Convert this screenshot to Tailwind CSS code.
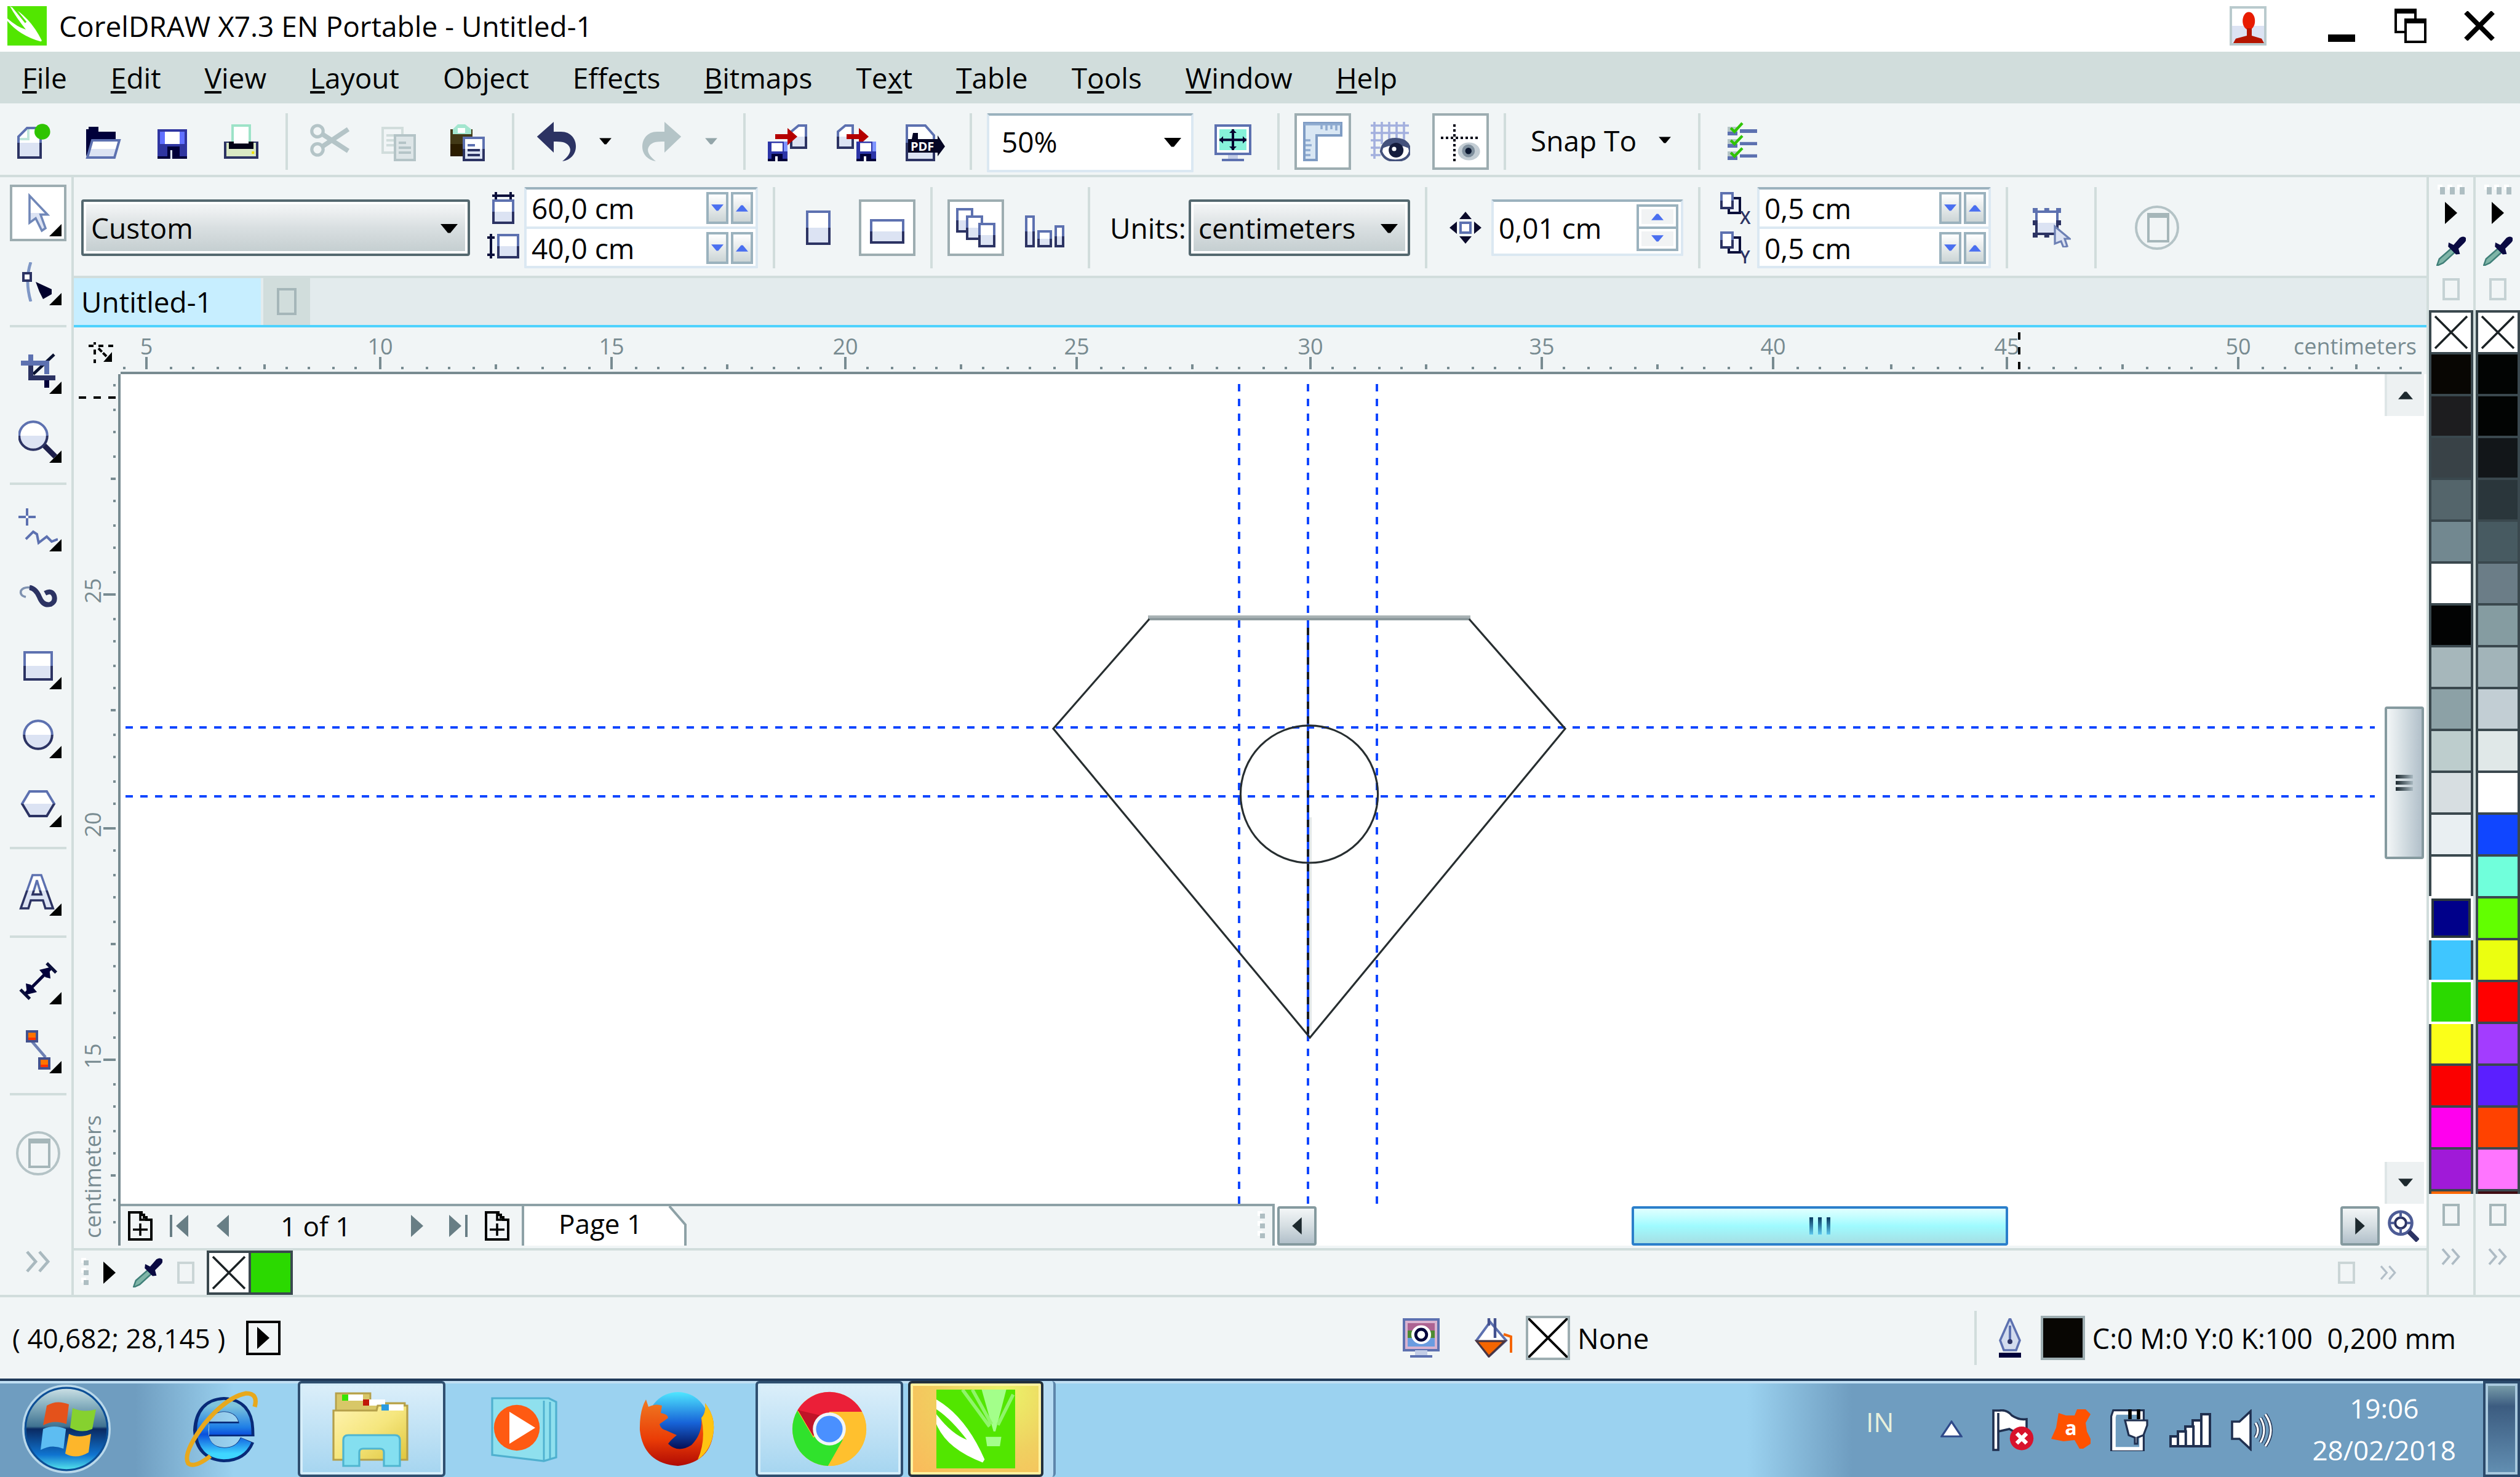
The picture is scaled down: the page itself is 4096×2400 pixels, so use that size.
<!DOCTYPE html>
<html lang="en">
<head>
    <meta charset="UTF-8">
    <meta name="viewport" content="width=device-width, initial-scale=1.0">
    <title>CorelDRAW X7.3 EN Portable - Untitled-1</title>
    <script src="https://cdn.jsdelivr.net/npm/@tailwindcss/browser@4"></script>
</head>
<body class="flex h-screen flex-col overflow-hidden bg-[#f1f5f6] font-['Open_Sans','Noto_Sans',sans-serif] text-[46px] leading-none text-black">

    <!-- shared icons -->
    <svg class="absolute size-0" aria-hidden="true">
        <defs>
            <linearGradient id="pane" x1="0" y1="0" x2="0" y2="1">
                <stop offset=".5" stop-color="#fff"/><stop offset=".5" stop-color="#dce3f3"/>
            </linearGradient>
            <linearGradient id="edge" x1="0" y1="0" x2="0" y2="1">
                <stop offset=".5" stop-color="#5d71b0"/><stop offset=".5" stop-color="#2c3363"/>
            </linearGradient>
            <linearGradient id="orbBg" x1="0" y1="0" x2="0" y2="1">
                <stop offset="0" stop-color="#d5e6ea"/><stop offset=".2" stop-color="#8fb6c4"/><stop offset=".47" stop-color="#3f7291"/><stop offset=".5" stop-color="#0a2a62"/><stop offset=".8" stop-color="#0f74d0"/><stop offset="1" stop-color="#5ff5f0"/>
            </linearGradient>
            <linearGradient id="ieBlue" x1="0" y1="0" x2="0" y2="1">
                <stop offset="0" stop-color="#7fc4dc"/><stop offset=".45" stop-color="#1f7fe6"/><stop offset=".6" stop-color="#0b50dc"/><stop offset="1" stop-color="#3fd6ff"/>
            </linearGradient>
            <linearGradient id="folder" x1="0" y1="0" x2="1" y2="1">
                <stop offset="0" stop-color="#fff3b0"/><stop offset=".5" stop-color="#f5e67e"/><stop offset="1" stop-color="#dfc53c"/>
            </linearGradient>
            <linearGradient id="foxRed" x1="0" y1="0" x2="0" y2="1">
                <stop offset="0" stop-color="#f07a22"/><stop offset=".6" stop-color="#ea3c06"/><stop offset="1" stop-color="#b00a04"/>
            </linearGradient>
            <linearGradient id="foxGlobe" x1="0" y1="0" x2="0" y2="1">
                <stop offset="0" stop-color="#4fe6ff"/><stop offset=".5" stop-color="#1763d8"/><stop offset="1" stop-color="#00003e"/>
            </linearGradient>
        </defs>
        <symbol id="caret" viewBox="0 0 7 4"><path d="M0 0H7L4 3.6H3Z" fill="currentColor"/></symbol>
        <symbol id="flyout" viewBox="0 0 5 5"><path d="M5 0V5H0Z" fill="#020403"/></symbol>
        <symbol id="arrow" viewBox="0 0 5 9"><path d="M0 0L5 4.5L0 9Z" fill="currentColor"/></symbol>
        <symbol id="tofu" viewBox="0 0 7 9"><path d="M.5 .5H6.5V8.5H.5Z" fill="none" stroke="currentColor"/></symbol>
        <symbol id="more" viewBox="0 0 11 9"><path d="M1 .5L4.5 4.5L1 8.5M6 .5L9.5 4.5L6 8.5" fill="none" stroke="currentColor" stroke-width="1.2"/></symbol>
        <symbol id="cross" viewBox="0 0 16 16"><path d="M1.5 1.5L14.5 14.5M14.5 1.5L1.5 14.5" stroke="#1b2225" stroke-width=".9"/></symbol>
        <symbol id="gripH" viewBox="0 0 11 4"><path d="M0 0H2V2H0ZM4 0H6V2H4ZM8 0H10V2H8Z" fill="#fff"/><path d="M1 1H3V4H1ZM5 1H7V4H5ZM9 1H11V4H9Z" fill="#aebec2"/></symbol>
        <symbol id="gripV" viewBox="0 0 3 12"><path d="M0 0H2V2H0ZM0 4H2V6H0ZM0 8H2V10H0Z" fill="#fff"/><path d="M1 1H3V3H1ZM1 5H3V7H1ZM1 9H3V11H1Z" fill="#aebec2"/></symbol>
        <symbol id="dropper" viewBox="0 0 12 12">
            <path d="M6 5L7.500 6.500L2.800 10.800L.2 12L1.200 9.200Z" fill="#7fb5a8" stroke="#3f7f78" stroke-width=".6"/>
            <path d="M5 2.500L7 3.500L9.500 .6Q11 -.4 12 .6Q12.400 1.600 11.400 2.600L9 5L9.600 7.200L8 7.400L4.800 4.200Z" fill="#0a0a42"/>
        </symbol>
        <symbol id="disk" viewBox="0 0 8 8"><path d="M0 0H8V8H0Z" fill="#2c35a8"/><path d="M6.500 0H8V4H6.500Z" fill="#7f95ff"/><path d="M1.500 .6H6V4H1.500Z" fill="#fff"/><path d="M0 7H8V8H0ZM1.500 5H6V8H1.500Z" fill="#00003a"/><path d="M3 6H4V8H3Z" fill="#fff"/></symbol>
        <symbol id="addPage" viewBox="0 0 10 12"><path d="M.5 .5H5.500V1.500H6.500V2.500H7.500V3.500H9.500V11.500H.5Z" fill="#f1f5f6" stroke="#020403"/><path d="M5 .5V3.500H9M2 7.500H8M5 5V10" fill="none" stroke="#020403" stroke-width=".9"/></symbol>
        <symbol id="globePane" viewBox="0 0 18 18"><circle cx="9" cy="9" r="8.500" fill="none" stroke="#b4c3c6"/><path d="M5.500 3.500H13.500V14.500H5.500Z" fill="none" stroke="#a5b6b9"/><path d="M5 3H14V5H5Z" fill="#a5b6b9"/></symbol>
        <symbol id="leaf" viewBox="0 0 16 16">
            <path d="M0 0H16V16H0Z" fill="#52e600"/>
            <path d="M0 2Q6 5.500 9.800 14.200L9.400 14.800Q2 12 0 7V5Q3 9 6.200 10.200Q3 6 0 4Z" fill="#fff"/>
            <path d="M9.200 0H14.200L12 8.500H11.600Z" fill="#a3ff8a"/>
            <path d="M5.300 0L10.800 7.500M7.300 0L11.200 7M15.600 1L12.500 7.200" stroke="#8ff56a" stroke-width=".7" fill="none"/>
            <path d="M10 9.600H13.200L12.900 11.500H10.300Z" fill="#a3ff8a"/>
        </symbol>
    </svg>

    <!-- title bar -->
    <header class="flex h-21 shrink-0 items-center bg-white pl-3">
        <svg class="h-16 w-16" viewBox="0 0 16 16" aria-hidden="true">
            <path d="M0 0H16V16H0Z" fill="#52e600"/>
            <path d="M1 0Q9 4 14 14L13.600 14.400Q5 12 0 6V5Q4 8.500 7.500 9.500Q3.500 4.500 1 0Z" fill="#fff"/>
            <path d="M2.500 .5L7.500 6.600M5 .3L8.500 5" stroke="#52e600" stroke-width=".8"/>
        </svg>
        <h1 class="ml-5 grow">CorelDRAW X7.3 EN Portable - Untitled-1</h1>
        <button class="mr-25" aria-label="Account">
            <svg class="h-16 w-15" viewBox="0 0 15 16"><path d="M.5 .5H14.500V15.500H.5Z" fill="url(#pane)" stroke="#b9cacd"/><ellipse cx="7.800" cy="6" rx="2.500" ry="3.600" fill="#e81c00"/><path d="M7 9H9V12L13 13.200L14 15H1.500L2.500 13.200L7 12Z" fill="#b51500"/></svg>
        </button>
        <button class="mr-16" aria-label="Minimize"><svg class="h-16 w-11" viewBox="0 0 11 16"><path d="M0 11.500H11V14.500H0Z"/></svg></button>
        <button class="mr-14" aria-label="Restore"><svg class="h-14 w-13" viewBox="0 0 13 14"><path d="M.5 1V9.500H8.500V1Z" fill="#fff" stroke="#000"/><path d="M0 0H9V2H0Z"/><path d="M4.500 5V13.500H12.500V5Z" fill="#fff" stroke="#000"/><path d="M4 4H13V6H4Z"/></svg></button>
        <button class="mr-9" aria-label="Close"><svg class="h-12 w-15" viewBox="0 0 15 12"><path d="M2 .5L13 11.500M13 .5L2 11.500" stroke="#000" stroke-width="2"/></svg></button>
    </header>

    <!-- menu -->
    <nav class="flex h-21 shrink-0 items-center gap-[71px] bg-[#d1dddc] pl-9 [&_u]:decoration-4 [&_u]:underline-offset-4">
        <a href="#"><u>F</u>ile</a>
        <a href="#"><u>E</u>dit</a>
        <a href="#"><u>V</u>iew</a>
        <a href="#"><u>L</u>ayout</a>
        <a href="#">Ob<u>j</u>ect</a>
        <a href="#">Effe<u>c</u>ts</a>
        <a href="#"><u>B</u>itmaps</a>
        <a href="#">Te<u>x</u>t</a>
        <a href="#"><u>T</u>able</a>
        <a href="#">T<u>o</u>ols</a>
        <a href="#"><u>W</u>indow</a>
        <a href="#"><u>H</u>elp</a>
    </nav>

    <!-- standard toolbar -->
    <div class="flex h-30 shrink-0 items-start border-b-4 border-[#d1dddc] pt-4 pl-2 [&>button]:flex [&>button]:h-23 [&>button]:shrink-0 [&>button]:items-center [&>button]:justify-center">
        <button class="w-24" aria-label="New"><svg class="size-16" viewBox="0 0 16 16"><path d="M1.500 14.500V6L5 2.500H10.500V14.500Z" fill="url(#pane)" stroke="url(#edge)"/><path d="M2 7H5.500V3" fill="none" stroke="#bfe6da"/><circle cx="11.200" cy="4" r="3.200" fill="#2fc400"/></svg></button>
        <button class="ml-4 w-24" aria-label="Open"><svg class="size-16" viewBox="0 0 16 16"><path d="M1 14V3H2V2H6V4H13V8H4Z" fill="#00003a"/><path d="M3.500 7.500H14.500L12.500 14.500H1.500Z" fill="url(#pane)" stroke="#5d71b0"/></svg></button>
        <button class="ml-4 w-24" aria-label="Save"><svg class="size-16" viewBox="0 0 16 16"><path d="M2 3H14V15H2Z" fill="#2f35a0"/><path d="M3 4H13V9H3Z" fill="#6170ff"/><path d="M5 4H11V9H5Z" fill="#fff"/><path d="M2 14H14V15H2ZM6 10H11V15H6Z" fill="#00003a"/><path d="M7.200 11.500H8V15H7.200Z" fill="#dce3f3"/></svg></button>
        <button class="ml-4 w-24" aria-label="Print"><svg class="size-16" viewBox="0 0 16 16"><path d="M4.500 1.500H11.500V9H4.500Z" fill="#fff" stroke="#9de3c8"/><path d="M1 8H15V15H1Z" fill="#2c3363"/><path d="M2 8.500H14V14H2Z" fill="#d9e8c4"/><path d="M3 8H13V11H3Z" fill="#020416"/><path d="M5 6H11V8.800H5Z" fill="#fff"/><path d="M12.300 12H13.300V13H12.300Z" fill="#f0e000"/></svg></button>
        <span class="ml-6 h-23 w-1 bg-[#d1dddc]"></span>
        <button class="ml-5 w-24" aria-label="Cut"><svg class="size-16" viewBox="0 0 16 16" fill="none" stroke="#b4c4c7" stroke-width="1.300"><circle cx="3" cy="3.800" r="2.300"/><circle cx="3" cy="11.200" r="2.300"/><path d="M5 5L15.500 11.800M5 10L15.500 3" stroke-width="1.900"/></svg></button>
        <button class="ml-4 w-24" aria-label="Copy"><svg class="size-16" viewBox="0 0 16 16"><path d="M1.500 2.500H9.500V12.500H1.500Z" fill="#f1f5f6" stroke="#d1dddc"/><path d="M3 5.500H6M3 7.500H6M3 9.500H6" stroke="#d1dddc"/><path d="M6.500 5.500H14.500V15.500H6.500Z" fill="#dde5e7" stroke="#b4c4c7"/><path d="M8 8.500H11M8 10.500H13M8 12.500H13" stroke="#b4c4c7"/></svg></button>
        <button class="ml-4 w-24" aria-label="Paste"><svg class="size-16" viewBox="0 0 16 16"><path d="M1 3H10V14H1Z" fill="#433a17"/><path d="M1 9H10V14H1Z" fill="#2b1d00"/><path d="M2 5V3L4 1H7L9.500 3V5Z" fill="#a3e6cf"/><path d="M4 2.500H7V4.500H4Z" fill="#fff"/><path d="M6.500 6.500H14.500V15.500H6.500Z" fill="url(#pane)" stroke="url(#edge)"/><path d="M8 9H11V10H8Z" fill="#5d71b0"/><path d="M8 11H13V12H8ZM8 13H13V14H8Z" fill="#2c3363"/></svg></button>
        <span class="ml-6 h-23 w-1 bg-[#d1dddc]"></span>
        <button class="ml-5 w-24" aria-label="Undo"><svg class="size-16" viewBox="0 0 16 16"><path d="M.2 6L7 0V4H10C14 4 16 7 16 10C16 13 14 15.500 10.500 16C13 14 14.500 12 13.300 10C12 8 10 8 7 8V12.500Z" fill="#2c3363"/></svg></button>
        <button class="ml-3 w-10" aria-label="Undo list"><svg class="h-3 w-5" viewBox="0 0 7 4"><use href="#caret"/></svg></button>
        <button class="ml-6 w-24 text-[#b4c4c7]" aria-label="Redo"><svg class="size-16" viewBox="0 0 16 16"><path d="M15.800 6L9 0V4H6C2 4 0 7 0 10C0 13 2 15.500 5.500 16C3 14 1.500 12 2.700 10C4 8 6 8 9 8V12.500Z" fill="currentColor"/></svg></button>
        <button class="ml-3 w-10 text-[#93a5a9]" aria-label="Redo list"><svg class="h-3 w-5" viewBox="0 0 7 4"><use href="#caret"/></svg></button>
        <span class="ml-8 h-23 w-1 bg-[#d1dddc]"></span>
        <button class="ml-5 w-24" aria-label="Import"><svg class="size-16" viewBox="0 0 16 16"><path d="M9.500 10.500V4L12.500 1.500H15.500V10.500Z" fill="url(#pane)" stroke="url(#edge)"/><path d="M3 5H8V2.500L12 6L8 9.500V7H3Z" fill="#b50000"/><use href="#disk" y="8" width="8" height="8"/></svg></button>
        <button class="ml-4 w-24" aria-label="Export"><svg class="size-16" viewBox="0 0 16 16"><path d="M.5 10.500V4L3.500 1.500H6.500V10.500Z" fill="url(#pane)" stroke="url(#edge)"/><path d="M4 5H9V2.500L13 6L9 9.500V7H4Z" fill="#b50000"/><use href="#disk" x="8" y="8" width="8" height="8"/></svg></button>
        <button class="ml-4 w-24" aria-label="Publish to PDF"><svg class="size-16" viewBox="0 0 16 16"><path d="M.5 1.500H8L11.500 5.500V15.500H.5Z" fill="url(#pane)" stroke="url(#edge)"/><path d="M1 7H2.500L3 4.500H5V7H13V5.500L16 10L13 14V12.500H1Z" fill="#050524"/><text x="2" y="11.800" font-size="5" font-weight="700" fill="#fff">PDF</text></svg></button>
        <span class="ml-6 h-23 w-1 bg-[#d1dddc]"></span>
        <div class="relative ml-6 h-24 w-84">
            <select class="size-full appearance-none rounded-xs border-4 border-[#dbe8f2] border-t-[#9bb2be] bg-white pb-1 pl-5" aria-label="Zoom level"><option>50%</option></select>
            <svg class="pointer-events-none absolute top-10 right-5 h-4 w-7"><use href="#caret"/></svg>
        </div>
        <button class="ml-4 w-24" aria-label="Full-screen preview"><svg class="size-16" viewBox="0 0 16 16"><path d="M1 1.500H15V13H1Z" fill="#fff" stroke="#5d71b0"/><path d="M2.500 3H13.500V11.500H2.500Z" fill="#86f2da"/><path d="M8 3V11.500M2.500 7.300H13.500" stroke="#050530"/><path d="M6.500 4.500L8 3L9.500 4.500ZM6.500 10L8 11.500L9.500 10ZM4 5.800L2.500 7.300L4 8.800ZM12 5.800L13.500 7.300L12 8.800Z" fill="#050530"/><path d="M6 13.500H10V15H6Z" fill="#c3cde6"/><path d="M3.500 15H12.500V16H3.500Z" fill="#5d71b0"/></svg></button>
        <span class="ml-6 h-23 w-1 bg-[#d1dddc]"></span>
        <button class="ml-6 w-23 border-4 border-[#9dadb1] bg-white" aria-label="Show rulers"><svg class="size-16" viewBox="0 0 16 16"><path d="M.5 .5H15.500V5.500H5.500V15.500H.5Z" fill="#d9e7f4" stroke="#7f9cc4"/><path d="M.5 1H15.500M7.500 1V3M9.500 1V3.500M11.500 1V3M13.500 1V3.500M1 7.500H3M1 9.500H3.500M1 11.500H3M1 13.500H3" stroke="#8fabd0" stroke-width=".9"/></svg></button>
        <button class="ml-4 w-24" aria-label="Show grid"><svg class="size-16" viewBox="0 0 16 16"><path d="M1.500 0V15M4.500 0V9M7.500 0V8M10.500 0V7M13.500 0V8M0 1.500H15.500M0 4.500H15.500M0 7.500H5M0 10.500H4M0 13.500H4" stroke="#a3b0de" stroke-width=".9"/><ellipse cx="10" cy="11.500" rx="6.300" ry="4.800" fill="#fff"/><path d="M4.200 12Q5 7 10 7Q15.500 7 16 12Q15 15.800 10 15.800Q5.500 15.800 4.200 12Z" fill="#fff" stroke="#44527c"/><path d="M4.200 11Q6 6.500 10.500 7Q15 7.500 16 11Q10 8 4.200 11Z" fill="#44527c"/><circle cx="10.300" cy="11.500" r="3" fill="#141c3c"/><circle cx="9.500" cy="11" r=".9" fill="#fff"/></svg></button>
        <button class="ml-5 w-23 border-4 border-[#9dadb1] bg-white" aria-label="Show guidelines"><svg class="size-16" viewBox="0 0 16 16"><path d="M5.500 1V16" stroke="#020416" stroke-dasharray="1 1"/><path d="M0 6.500H16" stroke="#020416" stroke-dasharray="1 1"/><ellipse cx="11.400" cy="12" rx="4.500" ry="3.600" fill="#c3cdd4"/><circle cx="11.200" cy="11.800" r="2.600" fill="#7f8f9d"/><circle cx="11.200" cy="11.800" r="1.300" fill="#0b1730"/></svg></button>
        <span class="ml-6 h-23 w-1 bg-[#d1dddc]"></span>
        <button class="ml-10 gap-9 pb-1">Snap To <svg class="h-3 w-5" viewBox="0 0 7 4"><use href="#caret"/></svg></button>
        <span class="ml-11 h-23 w-1 bg-[#d1dddc]"></span>
        <button class="ml-5 w-24" aria-label="Options"><svg class="size-16" viewBox="0 0 16 16"><path d="M2 2H6V5H2ZM2 7H6V10H2ZM2 12H6V15H2Z" fill="#b4c4c7"/><path d="M2 4H6V5.500H2ZM2 9H6V10.500H2ZM2 14H6V15.500H2ZM7 3H14V4.500H7ZM7 8.200H14V9.500H7ZM7 13.200H14V14.500H7Z" fill="#5d71b0"/><path d="M3.300 2.500L4.800 4L8 .5M3.300 7.500L4.800 9L8 5.700M3.300 12.500L4.800 14L8 10.700" fill="none" stroke="#2fc400" stroke-width="1.100"/></svg></button>
    </div>

    <div class="flex min-h-0 grow">

        <!-- toolbox -->
        <aside class="flex w-30 shrink-0 flex-col items-center border-r-4 border-[#d1dddc] pt-3 pl-2 [&>button]:relative [&>button]:flex [&>button]:h-23 [&>button]:w-23 [&>button]:shrink-0 [&>button]:items-center [&>button]:justify-center">
            <button class="border-4 border-[#9dadb1] bg-white" aria-label="Pick"><svg class="size-16" viewBox="0 0 16 16"><path d="M4.500 1L11.800 8.700H9L11 14.200L9.500 15.200L7 10.200L4.500 12Z" fill="url(#pane)" stroke="#7087b8" stroke-width=".9"/></svg><svg class="absolute right-1 bottom-1 size-5"><use href="#flyout"/></svg></button>
            <button class="mt-5" aria-label="Shape"><svg class="size-16" viewBox="0 0 16 16"><path d="M5 0Q2.500 7.500 5 16" fill="none" stroke="#7f97c6" stroke-width="1.200"/><path d="M2 4.500H5V7.500H2Z" fill="#fff" stroke="#2c3363"/><path d="M7 8L13.500 11V13L10 15L8.500 12Z" fill="#00002c"/></svg><svg class="absolute right-2 bottom-2 size-5"><use href="#flyout"/></svg></button>
            <span class="mt-6 h-1 w-23 shrink-0 bg-[#d1dddc]"></span>
            <button class="mt-6" aria-label="Crop"><svg class="size-16" viewBox="0 0 16 16"><path d="M6 9.500L14.500 1.500" stroke="#0a1230" stroke-width="1.200"/><path d="M1 5H11.500V9.500" fill="none" stroke="#5d71b0" stroke-width="2"/><path d="M5 1.500V4" stroke="#5d71b0" stroke-width="2"/><path d="M5 6V11H15" fill="none" stroke="#2c3363" stroke-width="2"/><path d="M11.500 12V15" stroke="#00003a" stroke-width="2"/></svg><svg class="absolute right-2 bottom-2 size-5"><use href="#flyout"/></svg></button>
            <button class="mt-5" aria-label="Zoom"><svg class="size-16" viewBox="0 0 16 16"><path d="M10.500 10.500L15 15" stroke="#1d1f4a" stroke-width="2.200"/><circle cx="6" cy="6.500" r="5.700" fill="url(#pane)" stroke="url(#edge)"/></svg><svg class="absolute right-2 bottom-2 size-5"><use href="#flyout"/></svg></button>
            <span class="mt-6 h-1 w-23 shrink-0 bg-[#d1dddc]"></span>
            <button class="mt-6" aria-label="Freehand"><svg class="size-16" viewBox="0 0 16 16"><path d="M0 3.500H7M3.500 0V7" stroke="#5d71b0"/><path d="M3 3H4V4H3Z" fill="#fff"/><path d="M3 12.500L6 9.500L7.500 10.500L8.200 14L11.500 11.500L13.500 13.500L16 12.500" fill="none" stroke="#5d71b0"/></svg><svg class="absolute right-2 bottom-2 size-5"><use href="#flyout"/></svg></button>
            <button class="mt-5" aria-label="Artistic media"><svg class="size-16" viewBox="0 0 16 16"><path d="M3 8Q.5 7.500 1 5.500Q2 3.800 5 4.200" fill="none" stroke="#7f92b0" stroke-width=".9"/><path d="M4.500 4.200Q7 4.500 8.500 8Q10 11.800 13 11Q15.200 10 14.500 7.500Q13.500 5 10.800 6.500" fill="none" stroke="#2c3363" stroke-width="2"/></svg></button>
            <button class="mt-5" aria-label="Rectangle"><svg class="size-16" viewBox="0 0 16 16"><path d="M2.500 2.500H13.500V13.500H2.500Z" fill="url(#pane)" stroke="url(#edge)"/></svg><svg class="absolute right-2 bottom-2 size-5"><use href="#flyout"/></svg></button>
            <button class="mt-5" aria-label="Ellipse"><svg class="size-16" viewBox="0 0 16 16"><circle cx="8" cy="8" r="5.700" fill="url(#pane)" stroke="url(#edge)"/></svg><svg class="absolute right-2 bottom-2 size-5"><use href="#flyout"/></svg></button>
            <button class="mt-5" aria-label="Polygon"><svg class="size-16" viewBox="0 0 16 16"><path d="M4.500 3H11.500L14.500 8L11.500 13H4.500L1.500 8Z" fill="url(#pane)" stroke="url(#edge)"/></svg><svg class="absolute right-2 bottom-2 size-5"><use href="#flyout"/></svg></button>
            <span class="mt-6 h-1 w-23 shrink-0 bg-[#d1dddc]"></span>
            <button class="mt-6" aria-label="Text"><svg class="size-16 overflow-visible" viewBox="0 0 16 16"><text x="7.500" y="14.500" text-anchor="middle" font-size="19" font-weight="700" fill="url(#pane)" stroke="url(#edge)" stroke-width=".9">A</text></svg><svg class="absolute right-2 bottom-2 size-5"><use href="#flyout"/></svg></button>
            <span class="mt-6 h-1 w-23 shrink-0 bg-[#d1dddc]"></span>
            <button class="mt-6" aria-label="Dimension"><svg class="size-16" viewBox="0 0 16 16"><path d="M3 13L13 3" stroke="#00003a" stroke-width="1.300"/><path d="M11.500 .8L15.300 4.600M.8 11.500L4.600 15.300" stroke="#0a0f3a" stroke-width="1.300"/><path d="M8.500 3.500L12.500 2.500L13 7L11 6.500ZM7.500 12.500L3.500 13.500L3 9L5 9.500Z" fill="#00003a"/></svg><svg class="absolute right-2 bottom-2 size-5"><use href="#flyout"/></svg></button>
            <button class="mt-5" aria-label="Connector"><svg class="size-16" viewBox="0 0 16 16"><path d="M5 4L11 11" stroke="#6d80b4" stroke-width="1.200"/><path d="M3 0H8V5H3ZM8 11H13V16H8Z" fill="#43518e"/><path d="M4 1H7V4H4ZM9 12H12V15H9Z" fill="#ff7300"/><path d="M4 3H7V4H4ZM9 14H12V15H9Z" fill="#ff3300"/></svg><svg class="absolute right-2 bottom-2 size-5"><use href="#flyout"/></svg></button>
            <span class="mt-6 h-1 w-23 shrink-0 bg-[#d1dddc]"></span>
            <button class="mt-12" aria-label="Quick customize"><svg class="size-18"><use href="#globePane"/></svg></button>
            <button class="mt-auto mb-2" aria-label="More tools"><svg class="h-9 w-12 text-[#a9b9bf]"><use href="#more"/></svg></button>
        </aside>

        <main class="flex min-w-0 grow flex-col">

            <!-- property bar -->
            <div class="flex h-41 shrink-0 items-start border-b-4 border-[#d1dddc] pt-4">
                <div class="flex h-33 items-center">
                    <div class="relative ml-3 h-23 w-158">
                        <select class="size-full appearance-none rounded-sm border-4 border-[#54686f] bg-linear-to-b from-[#f1f3f4] from-10% via-[#d9dfe1] via-50% to-[#c3cdcf] pl-3 ring-4 ring-white ring-inset" aria-label="Page size"><option>Custom</option></select>
                        <svg class="pointer-events-none absolute top-10 right-5 h-4 w-7"><use href="#caret"/></svg>
                    </div>
                    <div class="ml-7 flex flex-col gap-3">
                        <svg class="h-13 w-14" viewBox="0 0 14 13"><path d="M2.500 3.500H10.500V12.500H2.500Z" fill="url(#pane)" stroke="url(#edge)"/><path d="M2 1.500H11M3.500 0V3M9.500 0V3" stroke="#0a0f3a"/></svg>
                        <svg class="h-13 w-14" viewBox="0 0 14 13"><path d="M4.500 1.500H12.500V10.500H4.500Z" fill="url(#pane)" stroke="url(#edge)"/><path d="M1.500 1V11M0 2.500H3M0 9.500H3" stroke="#0a0f3a"/></svg>
                    </div>
                    <div class="pair ml-1"></div>
                    <span class="ml-6 h-33 w-1 bg-[#d1dddc]"></span>
                    <button class="ml-6 flex size-23 items-center justify-center" aria-label="Portrait"><svg class="h-14 w-10" viewBox="0 0 10 14"><path d="M.5 .5H9.500V13.500H.5Z" fill="url(#pane)" stroke="url(#edge)"/></svg></button>
                    <button class="ml-5 flex size-23 items-center justify-center border-4 border-[#9dadb1] bg-white" aria-label="Landscape"><svg class="mt-3 h-10 w-14" viewBox="0 0 14 10"><path d="M.5 .5H13.500V9.500H.5Z" fill="url(#pane)" stroke="url(#edge)"/></svg></button>
                    <span class="ml-6 h-33 w-1 bg-[#d1dddc]"></span>
                    <button class="ml-6 flex size-23 items-center justify-center border-4 border-[#9dadb1] bg-white" aria-label="All pages"><svg class="size-16" viewBox="0 0 16 16" fill="url(#pane)" stroke="url(#edge)"><path d="M.5 .5H6.500V9.500H.5Z"/><path d="M4.500 3.500H10.500V12.500H4.500Z"/><path d="M9.500 6.500H15.500V15.500H9.500Z"/></svg></button>
                    <button class="ml-5 flex size-23 items-center justify-center" aria-label="Current page"><svg class="size-16" viewBox="0 0 16 16" fill="url(#pane)" stroke="url(#edge)"><path d="M.5 3.500H3.500V15.500H.5Z"/><path d="M5.500 9.500H10.500V15.500H5.500Z"/><path d="M12.500 7.500H15.500V15.500H12.500Z"/></svg></button>
                    <span class="ml-6 h-33 w-1 bg-[#d1dddc]"></span>
                    <label class="ml-8 w-32" for="units">Units:</label>
                    <div class="relative h-23 w-90">
                        <select id="units" class="size-full appearance-none rounded-sm border-4 border-[#54686f] bg-linear-to-b from-[#f1f3f4] from-10% via-[#d9dfe1] via-50% to-[#c3cdcf] pl-3 ring-4 ring-white ring-inset"><option>centimeters</option></select>
                        <svg class="pointer-events-none absolute top-10 right-5 h-4 w-7"><use href="#caret"/></svg>
                    </div>
                    <span class="ml-6 h-33 w-1 bg-[#d1dddc]"></span>
                    <svg class="ml-8 h-13 w-15" viewBox="0 0 15 13"><path d="M7.500 0L10 3H5ZM7.500 13L10 10H5ZM1 6.500L4 4V9ZM14 6.500L11 4V9Z" fill="#0b0b2b"/><path d="M5.500 4.500H9.500V8.500H5.500Z" fill="#fff" stroke="#5d71b0"/></svg>
                    <div class="ml-3 flex h-23 w-78 items-center rounded-xs border-4 border-[#dbe8f2] border-t-[#9bb2be] bg-white pr-1">
                        <input class="w-full min-w-0 grow pl-2 outline-none" value="0,01 cm" aria-label="Nudge distance">
                        <div class="flex h-19 w-17 shrink-0 flex-col border-4 border-[#9bb2be]">
                            <button class="flex grow items-center justify-center border-b-4 border-[#9bb2be] bg-[#f1f3f4] ring-4 ring-white ring-inset" aria-label="Increase"><svg class="h-3 w-5 rotate-180 text-[#4a6ff0]"><use href="#caret"/></svg></button>
                            <button class="flex grow items-center justify-center bg-[#f1f3f4] ring-4 ring-white ring-inset" aria-label="Decrease"><svg class="h-3 w-5 text-[#4a6ff0]"><use href="#caret"/></svg></button>
                        </div>
                    </div>
                    <span class="ml-6 h-33 w-1 bg-[#d1dddc]"></span>
                    <div class="ml-8 flex flex-col gap-3">
                        <svg class="h-13 w-14 overflow-visible" viewBox="0 0 14 13"><path d="M3.500 2.500H8V8.500H3.500Z" fill="#eef2fa" stroke="#0a0f3a"/><path d="M.5 .5H5V6.500H.5Z" fill="#fff" stroke="url(#edge)"/><text x="8" y="13" font-size="7" font-weight="600" fill="#2c3363">X</text></svg>
                        <svg class="h-13 w-14 overflow-visible" viewBox="0 0 14 13"><path d="M3.500 2.500H8V8.500H3.500Z" fill="#eef2fa" stroke="#0a0f3a"/><path d="M.5 .5H5V6.500H.5Z" fill="#fff" stroke="url(#edge)"/><text x="8" y="13" font-size="7" font-weight="600" fill="#2c3363">Y</text></svg>
                    </div>
                    <div class="pair ml-1"></div>
                    <span class="ml-6 h-33 w-1 bg-[#d1dddc]"></span>
                    <button class="ml-6 flex size-23 items-center justify-center" aria-label="Treat as filled"><svg class="h-16 w-16" viewBox="0 0 16 16"><path d="M2 1.500H10.500V10.500H2Z" fill="url(#pane)" stroke="url(#edge)"/><path d="M.5 0H2.500V2H.5ZM5.200 0H7.200V2H5.200ZM10 0H12V2H10Z" fill="#5d71b0"/><path d="M.5 5H2.500V7H.5ZM10 5H12V7H10ZM.5 10H2.500V12H.5ZM5.200 10H7.200V12H5.200Z" fill="#2c3363"/><path d="M9.500 7.500L15.500 12.500H13.500L14.500 15.500L13 16L12 13.500L9.500 14.500Z" fill="#dce3f3" stroke="#6d80b4" stroke-width=".8"/></svg></button>
                    <span class="ml-6 h-33 w-1 bg-[#d1dddc]"></span>
                    <button class="ml-13 flex size-23 items-center justify-center" aria-label="Quick customize"><svg class="size-18"><use href="#globePane"/></svg></button>
                </div>
            </div>

            <!-- document tabs -->
            <div class="flex h-20 shrink-0 border-b-4 border-[#4fd2fd] bg-[#e3ebed]">
                <button class="mr-1 w-76 bg-[#c7eeff] pl-3 text-left text-[46px]">Untitled-1</button>
                <button class="flex w-19 items-center justify-center bg-[#d1dddc] text-[#a5b6b9]" aria-label="New document"><svg class="h-11 w-8" viewBox="0 0 8 11"><path d="M.5 .5H7.500V10.500H.5Z" fill="none" stroke="currentColor"/></svg></button>
            </div>

            <!-- rulers and drawing window -->
            <div class="grid min-h-0 grow grid-cols-[76px_1fr] grid-rows-[76px_1fr] border-b-4 border-[#d1dddc]">
                <svg class="h-19 w-19" viewBox="0 0 19 19"><path d="M6 7.500H8M10 7.500H12M14 7.500H16M8.500 6V7M8.500 9V11M8.500 13V14.500M10 8.500L14 12.500" stroke="#020403" stroke-dasharray="2 .6"/><path d="M15.500 10V14H12Z" fill="#020403"/></svg>
                <svg id="hruler" class="h-19 w-full" fill="#788b91"></svg>
                <svg id="vruler" class="h-full w-19" fill="#788b91"></svg>
                <div class="flex min-h-0 min-w-0 flex-col">
                    <div class="flex min-h-0 grow bg-white">
                        <svg class="h-full min-w-0 grow" viewBox="0 0 920 337" preserveAspectRatio="xMinYMin meet" fill="none">
                            <path d="M483.500 180V267" stroke="#e3e8e9"/>
                            <g stroke="#1046ff" stroke-dasharray="3 3">
                                <path d="M2 143.500H916M2 171.500H916"/>
                                <path d="M454.500 4V337M482.500 4V337M510.500 4V337"/>
                            </g>
                            <path d="M417.500 98.500H548.500" stroke="#a9b3b5"/>
                            <path d="M417.500 99.500H548.500" stroke="#8d9a9d"/>
                            <path d="M418 99.500L379 144L483.300 269.500L587 144L548 99.500" stroke="#272e30" stroke-width=".8"/>
                            <path d="M482.500 100V269" stroke="#1a1e20" stroke-dasharray="3 3" stroke-dashoffset="3"/>
                            <circle cx="483" cy="170.600" r="27.900" stroke="#272e30" stroke-width=".8"/>
                        </svg>
                        <div class="mr-1 flex w-16 shrink-0 flex-col text-[#1d292e]">
                            <button class="flex h-17 items-center justify-center border-l-4 border-[#dfe6e7] bg-[#edf1f2]" aria-label="Scroll up"><svg class="h-4 w-6 rotate-180"><use href="#caret"/></svg></button>
                            <button class="mt-118 flex h-62 flex-col items-center justify-center gap-1 rounded-sm border-4 border-[#859a9f] bg-linear-to-r from-[#f3f6f7] via-[#d2dce1] via-50% to-[#b2c0ca]" aria-label="Vertical scroll thumb"><span class="h-[6px] w-7 bg-linear-to-r from-[#1d2a30] to-[#a9b9c1]"></span><span class="h-[6px] w-7 bg-linear-to-r from-[#1d2a30] to-[#a9b9c1]"></span><span class="h-[6px] w-7 bg-linear-to-r from-[#1d2a30] to-[#a9b9c1]"></span></button>
                            <button class="mt-auto flex h-17 items-center justify-center border-l-4 border-[#dfe6e7] bg-[#edf1f2]" aria-label="Scroll down"><svg class="h-4 w-6"><use href="#caret"/></svg></button>
                        </div>
                    </div>

                    <div class="flex h-18 shrink-0 pb-1 text-[44px]">
                        <div class="flex w-469 items-center border-t-4 border-r-4 border-[#8da1a6] pl-3">
                            <button aria-label="Add page before"><svg class="h-12 w-10"><use href="#addPage"/></svg></button>
                            <button class="ml-7 text-[#687e85]" aria-label="First page"><svg class="h-9 w-8" viewBox="0 0 8 9"><path d="M0 0H1V9H0ZM7.500 0V9L2.500 4.500Z" fill="currentColor"/></svg></button>
                            <button class="ml-11 text-[#687e85]" aria-label="Previous page"><svg class="h-9 w-5 rotate-180"><use href="#arrow"/></svg></button>
                            <span class="ml-21 w-53">1 of 1</span>
                            <button class="text-[#687e85]" aria-label="Next page"><svg class="h-9 w-5"><use href="#arrow"/></svg></button>
                            <button class="ml-10 text-[#687e85]" aria-label="Last page"><svg class="h-9 w-8" viewBox="0 0 8 9"><path d="M7 0H8V9H7ZM0.500 0V9L5.500 4.500Z" fill="currentColor"/></svg></button>
                            <button class="ml-7" aria-label="Add page after"><svg class="h-12 w-10"><use href="#addPage"/></svg></button>
                            <button class="relative ml-5 h-full w-67 border-l-4 border-[#8da1a6] pb-2 pl-14 text-left"><svg class="absolute inset-0 h-full w-67" viewBox="0 0 67 16"><path d="M0 0H59L66 8V16H0Z" fill="#fff"/><path d="M59 0L65.500 7.500V16" fill="none" stroke="#8da1a6"/></svg><span class="relative">Page 1</span></button>
                            <svg class="mr-3 ml-auto h-12 w-3"><use href="#gripV"/></svg>
                        </div>
                        <div class="flex grow items-start bg-white pt-1 pl-1 text-[#1d292e]">
                            <button class="flex size-16 items-center justify-center rounded-sm border-4 border-[#859a9f] bg-linear-to-b from-[#f3f6f7] via-[#d5dee2] via-50% to-[#b2c0ca]" aria-label="Scroll left"><svg class="h-7 w-4 rotate-180"><use href="#arrow"/></svg></button>
                            <button class="ml-128 flex h-16 w-153 items-center justify-center gap-2 rounded-sm border-4 border-[#2b7fcb] bg-linear-to-b from-[#e0ffff] via-[#9ffbff] via-50% to-[#a5dfe4]" aria-label="Horizontal scroll thumb"><span class="h-7 w-[6px] bg-linear-to-b from-[#0a3a60] to-[#5cc8ee]"></span><span class="h-7 w-[6px] bg-linear-to-b from-[#0a3a60] to-[#5cc8ee]"></span><span class="h-7 w-[6px] bg-linear-to-b from-[#0a3a60] to-[#5cc8ee]"></span></button>
                            <button class="ml-auto flex size-16 items-center justify-center rounded-sm border-4 border-[#859a9f] bg-linear-to-b from-[#f3f6f7] via-[#d5dee2] via-50% to-[#b2c0ca]" aria-label="Scroll right"><svg class="h-7 w-4"><use href="#arrow"/></svg></button>
                            <button class="mr-3 ml-3 self-center" aria-label="Navigator"><svg class="h-13 w-13" viewBox="0 0 13 13" fill="none"><circle cx="5.500" cy="5.300" r="4.600" stroke="#4d5c96" stroke-width="1.200"/><circle cx="5.500" cy="5.300" r="2.200" stroke="#2c3363"/><path d="M5.500 1V3M5.500 7.500V9.500M1 5.300H3M8 5.300H10" stroke="#4d5c96"/><path d="M8.800 8.800L12.500 12.500" stroke="#2c3363" stroke-width="2"/></svg></button>
                        </div>
                    </div>
                </div>
            </div>

            <!-- document palette -->
            <div class="flex h-18 shrink-0 items-center pl-3">
                <svg class="h-12 w-3"><use href="#gripV"/></svg>
                <button class="ml-6" aria-label="Palette menu"><svg class="h-9 w-5"><use href="#arrow"/></svg></button>
                <button class="ml-7" aria-label="Sample colour"><svg class="size-12"><use href="#dropper"/></svg></button>
                <button class="ml-6 text-[#cad5d6]" aria-label="Scroll palette back"><svg class="h-10 w-7"><use href="#tofu"/></svg></button>
                <div class="ml-5 flex h-18 gap-1 bg-[#3a484e] p-1">
                    <button class="flex w-16 items-center justify-center bg-white" aria-label="No colour"><svg class="size-16"><use href="#cross"/></svg></button>
                    <button class="w-16 bg-[#2bd900]" aria-label="Green"></button>
                </div>
                <button class="ml-auto text-[#cad5d6]" aria-label="Scroll palette forward"><svg class="h-10 w-7"><use href="#tofu"/></svg></button>
                <button class="mr-11 ml-9 text-[#b3bfc8]" aria-label="Expand palette"><svg class="h-6 w-9"><use href="#more"/></svg></button>
            </div>
        </main>

        <!-- colour palettes -->
        <aside class="palette flex w-20 shrink-0 flex-col items-center border-x-4 border-[#d1dddc] pt-3" aria-label="Default palette"></aside>
        <aside class="palette flex w-18 shrink-0 flex-col items-center pt-3" aria-label="RGB palette"></aside>
    </div>

    <!-- status bar -->
    <footer class="flex h-34 shrink-0 items-center border-t-4 border-[#d1dddc] text-[44px]">
        <span class="w-100 pl-5">( 40,682; 28,145 )</span>
        <button class="flex h-14 w-14 items-center justify-center border-4 border-black" aria-label="Status options"><svg class="h-9 w-5"><use href="#arrow"/></svg></button>
        <svg class="ml-456 h-16 w-15" viewBox="0 0 15 16"><path d="M.5 .5H14.500V13H.5Z" fill="#d9b3d0" stroke="#5d71b0"/><path d="M2 2H13V5H2Z" fill="#ad6392"/><path d="M2 5H13V8H2Z" fill="#4d8a32"/><path d="M2 8H13V11.500H2Z" fill="#6a9ce0"/><ellipse cx="7.500" cy="6.700" rx="4" ry="3.800" fill="#fff"/><circle cx="7.500" cy="6.700" r="2.200" fill="#fff" stroke="#00003a" stroke-width="1.200"/><path d="M5 13H10V15H5Z" fill="#c3cde6"/><path d="M3 15H12V16H3Z" fill="#5d71b0"/></svg>
        <svg class="ml-14 h-16 w-16" viewBox="0 0 16 16"><path d="M6.500 1.500L13 9L6 15.500L1 9Z" fill="#fff" stroke="#5d71b0"/><path d="M1 9.300H12.500L6 15.500Z" fill="#f56500" stroke="#4a3540" stroke-width=".8"/><path d="M6 0V3M8.500 0V8" stroke="#43518e" stroke-width="1.100"/><path d="M12 6.500L15 7.500V14" fill="none" stroke="#f56500"/></svg>
        <span class="ml-5 flex size-18 items-center justify-center border-4 border-[#9dadb1] bg-white"><svg class="size-16" viewBox="0 0 16 16"><path d="M0 0L16 16M16 0L0 16" stroke="#000"/></svg></span>
        <span class="ml-3 text-[46px]">None</span>
        <span class="ml-auto h-22 w-1 bg-[#d1dddc]"></span>
        <svg class="ml-9 h-16 w-9" viewBox="0 0 9 16"><path d="M4.500 0L8.500 9L7 13H2L.5 9Z" fill="#d3dcee" stroke="#5d71b0" stroke-width=".9"/><path d="M4.500 3V9" stroke="#5d71b0"/><circle cx="4.500" cy="9.500" r="1" fill="#2c3363"/><path d="M0 14H9V16H0Z" fill="#00003a"/></svg>
        <span class="ml-8 size-18 border-4 border-[#9dadb1] bg-[#080603]"></span>
        <span class="ml-3 pr-26 text-[45px] whitespace-pre">C:0 M:0 Y:0 K:100  0,200 mm</span>
    </footer>

    <!-- windows taskbar -->
    <div class="flex h-40 shrink-0 items-stretch border-t-4 border-[#203a5a] bg-[linear-gradient(90deg,#6f9dc0_220px,#9bd2f0_380px,#9bd2f0_2840px,#6f9dc0_3010px)] text-[44px] text-white shadow-[inset_0_4px_#c0dff3]">
        <button class="ml-9 self-center" aria-label="Start">
            <svg class="size-37" viewBox="0 0 37 37">
                <circle cx="18" cy="18.500" r="17.500" fill="url(#orbBg)" stroke="#b9d8ea"/>
                <circle cx="18" cy="18.500" r="16.700" fill="none" stroke="#0d4f96" stroke-width=".8"/>
                <path d="M10 9Q14 6.500 19 8.500L18 16.500Q13 14.500 8.500 17Z" fill="#e4521b"/>
                <path d="M20.500 10Q25 12 30 10.500L28.500 18.500Q24 20.500 19.500 18Z" fill="#86d12f"/>
                <path d="M8.500 18.500Q13 16.500 17.800 18.500L16.800 26.500Q12 24.500 7.500 27Z" fill="#5dbdf2"/>
                <path d="M19 20.500Q23 22.500 28 20.500L27 28Q22 31 17.500 28.500Z" fill="#fdb62b"/>
            </svg>
        </button>
        <button class="ml-13 flex w-60 items-center justify-center" aria-label="Internet Explorer">
            <svg class="size-32" viewBox="0 0 32 32" fill="none">
                <path d="M27.500 20.500Q25 26.500 18 26.500Q9 26 8.500 16.500Q9 6.500 18 6Q27 6.500 27.300 16H12" stroke="#082a78" stroke-width="6"/>
                <path d="M27 20.500Q24.500 26 18 26Q9.500 25.500 9.300 16.500Q9.500 7 18 6.500Q26.500 7 26.800 16H12" stroke="url(#ieBlue)" stroke-width="4.600"/>
                <path d="M30.500 7Q32 1.500 27 1.500Q19 3 10 14Q1 26 3.500 30Q6 32 12.500 27" stroke="#e8a81c" stroke-width="1.800"/>
            </svg>
        </button>
        <button class="ml-2 flex w-60 items-center justify-center rounded-md border-4 border-[#2f4f70] bg-linear-to-b from-[#dceffa] to-[#a5d5f0] ring-4 ring-[#d5edf9] ring-inset" aria-label="Explorer">
            <svg class="h-31 w-33" viewBox="0 0 33 31">
                <path d="M2 1H16V5H30V10H2Z" fill="#d8c768" stroke="#b5a04a" stroke-width=".7"/>
                <path d="M5 1.500H13V4H5Z" fill="#fff"/><path d="M4.500 1.500H7V4H4.500Z" fill="#36e500"/>
                <path d="M13 3.500H22V6H13Z" fill="#fff"/><path d="M13 3.500H15.500V6H13Z" fill="#c01808"/>
                <path d="M1 8H18.500L19 6H31V28H1Z" fill="url(#folder)" stroke="#b5a04a" stroke-width=".8"/>
                <path d="M20.500 5.500H29.500V8H20.500Z" fill="#fff"/><path d="M20.500 5.500H23.500V8H20.500Z" fill="#2b9be0"/>
                <path d="M5 30.500V20Q5 18 7 18H26Q28 18 28 20V30.500H21.500V25Q21.500 23.500 20 23.500H13Q11.500 23.500 11.500 25V30.500Z" fill="#84dff0" stroke="#4fb5d0" stroke-width=".8"/>
            </svg>
        </button>
        <button class="ml-2 flex w-60 items-center justify-center" aria-label="Media Player">
            <svg class="h-27 w-28" viewBox="0 0 28 27">
                <path d="M1 1H24L27 2.500V25L22 26.500L1 24Z" fill="#8fe0ee" stroke="#4fb0cf" stroke-width=".8"/>
                <path d="M22 2V26.500M24.500 2.500V26" stroke="#4fb0cf" stroke-width=".7"/>
                <circle cx="11" cy="13" r="9.300" fill="#ff5a12"/><path d="M8 6.500L18.500 13L8 19.500Z" fill="#fff"/>
            </svg>
        </button>
        <button class="ml-2 flex w-60 items-center justify-center" aria-label="Firefox">
            <svg class="h-31 w-31" viewBox="0 0 31 31">
                <circle cx="16" cy="13" r="12.500" fill="url(#foxGlobe)"/>
                <path d="M27 5Q31 10 30.500 16Q29.500 29 16 30.500Q2 29.500 .5 16Q.3 8 3 3.500L4 6.500Q7 5 9.500 6L9 9Q12 9.500 12 11L8.500 13.500Q9 15.500 11 16L15.500 18Q13 20 12 21.500Q16 25.500 21.500 22Q26 17.500 25.500 11Q27.500 9 27 5Z" fill="url(#foxRed)"/>
                <path d="M27 5Q31 10 30.500 16Q29.700 24 24 28Q27.500 20 25.500 11Q27.500 9 27 5Z" fill="#ffc412"/>
            </svg>
        </button>
        <button class="ml-2 flex w-60 items-center justify-center rounded-md border-4 border-[#2f4f70] bg-linear-to-b from-[#dceffa] to-[#a5d5f0] ring-4 ring-[#d5edf9] ring-inset" aria-label="Chrome">
            <svg class="h-31 w-31" viewBox="0 0 31 31">
                <circle cx="15.500" cy="15.500" r="15" fill="#ffc02e"/>
                <path d="M15.500 15.500L2.500 8A15 15 0 0 1 28.800 8.500H15.500Z" fill="#eb1f38"/>
                <path d="M15.500 15.500L9 19L2.500 8A15 15 0 0 0 15 30.500L21 20Z" fill="#30e22c"/>
                <path d="M15.500 8.500H28.800A15 15 0 0 1 15 30.500L21.500 19Z" fill="#ffc02e"/>
                <path d="M2.700 7.800L9 18.500L12 10Z" fill="#c01428"/>
                <circle cx="15.500" cy="15.500" r="6.700" fill="#f1f5f6"/><circle cx="15.500" cy="15.500" r="5.400" fill="#4a90ff"/>
            </svg>
        </button>
        <div class="ml-2 flex w-60 rounded-md border-r-4 border-[#5d86ab] bg-[#b7dcf3]">
            <button class="flex w-55 items-center justify-center rounded-md border-4 border-[#22303c] bg-[radial-gradient(circle_at_70%_10%,#eaf56a,#f0d060_50%,#fbb85a)] ring-4 ring-[#fff2a0] ring-inset" aria-label="CorelDRAW">
                <svg class="size-32"><use href="#leaf"/></svg>
            </button>
        </div>

        <div class="ml-auto flex items-center">
            <span class="mb-6 text-[#e8f0dc]">IN</span>
            <button class="mt-1 ml-19" aria-label="Show hidden icons"><svg class="h-8 w-9" viewBox="0 0 9 8"><path d="M4.500 .5L8.500 6.500H.5Z" fill="#fff" stroke="#2f4a8a" stroke-width=".8"/></svg></button>
            <svg class="mt-1 ml-12 size-17" viewBox="0 0 17 17"><path d="M2.500 1.500V16.500H.5V.5H3Q6 0 8 2.500Q11 4.500 14 4V9Q10 10 7 8L2.500 9Z" fill="#fff" stroke="#203050" stroke-width=".9"/><circle cx="12" cy="11.800" r="4.800" fill="#d8122c"/><path d="M10 9.800L14 13.800M14 9.800L10 13.800" stroke="#fff" stroke-width="1.600"/></svg>
            <svg class="ml-7 size-16" viewBox="0 0 16 16"><path d="M3 1.500L6 2.500L9.500 2.500L10.500 0H14L16 2L14 5.500L14.500 9L16 12V14L13 16H11.500L9.500 12.500L5 13L0 12L2 7.500Z" fill="#ff5200"/><text x="8" y="10.500" text-anchor="middle" font-size="8" font-weight="700" fill="#fff">a</text></svg>
            <svg class="mt-1 ml-8 h-17 w-16" viewBox="0 0 16 17"><path d="M2 1.500H12.500V16H1.500V3Z" fill="none" stroke="#203050" stroke-width="3"/><path d="M2 1.500H12.500V16H1.500V3Z" fill="#6f9dc0" stroke="#fff" stroke-width="1.400"/><path d="M8 0V4M11.500 0V4" stroke="#000" stroke-width="1.400"/><path d="M6 4.500H15V6.500L13.500 10.500L11 11.500V14H10V11.500L7.500 10.500L6.500 6.500Z" fill="#fff" stroke="#203050" stroke-width=".8"/></svg>
            <svg class="mt-1 ml-8 h-14 w-17" viewBox="0 0 17 14"><path d="M.5 13.500V9.500H3.500V7.500H6.500V5.500H9.500V3H13V.5H16.500V13.500Z" fill="#fff" stroke="#203050"/><path d="M3.500 9V13M6.700 7V13M9.800 5V13M13 3V13" stroke="#203050"/></svg>
            <svg class="mt-1 ml-8 h-17 w-17" viewBox="0 0 17 17" fill="none"><path d="M.5 5H3.500L8 .8V16.200L3.500 12H.5Z" fill="#fff" stroke="#203050" stroke-width=".9"/><path d="M10 5.500Q12 8.500 10 11.500M12 3.500Q15 8.500 12 13.500M14 2Q18.500 8.500 14 15" stroke="#203050" stroke-width="1.500"/><path d="M10 5.500Q12 8.500 10 11.500M12 3.500Q15 8.500 12 13.500M14 2Q18.500 8.500 14 15" stroke="#fff" stroke-width=".8"/></svg>
            <div class="ml-16 flex flex-col items-center gap-[24px]"><time>19:06</time><time>28/02/2018</time></div>
            <button class="ml-11 h-full w-15 border-4 border-[#2b4a6b] bg-linear-to-b from-[#7fa3ad] via-[#3c5c80] via-25% to-[#6390b3] ring-4 ring-[#a9c9de] ring-inset" aria-label="Show desktop"></button>
        </div>
    </div>

    <!-- stacked value box used twice in the property bar -->
    <template id="pairTpl">
        <div class="flex h-33 w-95 flex-col rounded-xs border-4 border-[#dbe8f2] border-t-[#9bb2be] bg-white">
            <div class="flex h-16 items-center border-b-4 border-[#dbe8f2] pr-1">
                <input class="w-full min-w-0 grow pl-2 outline-none">
                <button class="mr-1 flex h-13 w-9 shrink-0 items-center justify-center border-4 border-[#9bb2be] bg-linear-to-b from-white to-[#ccd5d6]" aria-label="Decrease"><svg class="h-3 w-5 text-[#4a6ff0]"><use href="#caret"/></svg></button>
                <button class="flex h-13 w-9 shrink-0 items-center justify-center border-4 border-[#9bb2be] bg-linear-to-b from-white to-[#ccd5d6]" aria-label="Increase"><svg class="h-3 w-5 rotate-180 text-[#4a6ff0]"><use href="#caret"/></svg></button>
            </div>
            <div class="flex grow items-center pr-1">
                <input class="w-full min-w-0 grow pl-2 outline-none">
                <button class="mr-1 flex h-13 w-9 shrink-0 items-center justify-center border-4 border-[#9bb2be] bg-linear-to-b from-white to-[#ccd5d6]" aria-label="Decrease"><svg class="h-3 w-5 text-[#4a6ff0]"><use href="#caret"/></svg></button>
                <button class="flex h-13 w-9 shrink-0 items-center justify-center border-4 border-[#9bb2be] bg-linear-to-b from-white to-[#ccd5d6]" aria-label="Increase"><svg class="h-3 w-5 rotate-180 text-[#4a6ff0]"><use href="#caret"/></svg></button>
            </div>
        </div>
    </template>

    <!-- frame of a vertical palette, swatches are added below -->
    <template id="paletteTpl">
        <svg class="h-4 w-11 shrink-0"><use href="#gripH"/></svg>
        <button class="mt-3 shrink-0" aria-label="Palette menu"><svg class="h-9 w-5"><use href="#arrow"/></svg></button>
        <button class="mt-5 shrink-0" aria-label="Sample colour"><svg class="size-12"><use href="#dropper"/></svg></button>
        <button class="mt-5 shrink-0 text-[#c5d2d4]" aria-label="Scroll palette up"><svg class="h-9 w-7"><use href="#tofu"/></svg></button>
        <div class="swatches mt-4 flex min-h-0 w-18 grow flex-col gap-1 overflow-hidden bg-[#3a484e] px-1 pt-1"></div>
        <button class="mt-4 shrink-0 text-[#a5b6b9]" aria-label="Scroll palette down"><svg class="h-9 w-7"><use href="#tofu"/></svg></button>
        <button class="mt-9 mb-12 shrink-0 text-[#aebbc4]" aria-label="Expand palette"><svg class="h-7 w-10"><use href="#more"/></svg></button>
    </template>

    <script>
        // value boxes
        const values = [['60,0 cm', '40,0 cm', 'Page width', 'Page height'], ['0,5 cm', '0,5 cm', 'Duplicate X', 'Duplicate Y']];
        document.querySelectorAll('.pair').forEach((el, i) => {
            el.append(document.getElementById('pairTpl').content.cloneNode(true));
            el.querySelectorAll('input').forEach((input, j) => {
                input.value = values[i][j];
                input.setAttribute('aria-label', values[i][j + 2]);
            });
        });

        // palettes
        const palettes = [
            ['', '#080603', '#1d1d1f', '#394247', '#54656b', '#728890', '#ffffff', '#020303', '#a6b7bb', '#8ca1a6', '#bdcdcd', '#d7dee1', '#e9eff2', '#ffffff', '#00008a', '#3fc6ff', '#2bd900', '#fbff19', '#fb0000', '#ff00ee', '#a01ad8', '#ff6600'],
            ['', '#020403', '#020403', '#121619', '#2a363b', '#475a61', '#6b7d87', '#859ca1', '#a2b4b9', '#c2ced4', '#e0e8e8', '#ffffff', '#1046ff', '#70ffdb', '#62ff00', '#ebff10', '#ff0000', '#a33cff', '#5b1fff', '#ff4200', '#ff75ff', '#400c12']
        ];
        const used = ['#00008a', '#2bd900'];
        document.querySelectorAll('.palette').forEach((el, i) => {
            el.append(document.getElementById('paletteTpl').content.cloneNode(true));
            const box = el.querySelector('.swatches');
            palettes[i].forEach(color => {
                const b = document.createElement('button');
                b.className = 'h-16 w-16 shrink-0';
                if (color === '') {
                    b.className += ' bg-white';
                    b.innerHTML = '<svg class="size-16"><use href="#cross"/></svg>';
                } else {
                    b.style.backgroundColor = color;
                }
                b.setAttribute('aria-label', color || 'No colour');
                if (used.includes(color)) b.className += ' outline-4 outline-white';
                if (color === '#00008a') b.className += ' border-4 border-[#2a363b]';
                box.append(b);
            });
        });

        // rulers: one tick every half centimetre, px = 4 * unit
        const U = 4;
        const rect = (x, y, w, h, fill) => `<rect x="${x * U}" y="${y * U}" width="${w * U}" height="${h * U}"${fill ? ` fill="${fill}"` : ''}/>`;
        let h = rect(-1, 18, 936, 1);
        for (let k = 0; k <= 98; k++) {
            const n = k - 1;
            const x = Math.round(10.3 + n * 9.445);
            const len = n % 10 === 0 ? 5 : n % 5 === 0 ? 2 : 1;
            h += rect(x, 17 - len, 1, len);
            if (n % 10 === 0) h += `<text x="${(x + .5) * U}" y="${11 * U}" text-anchor="middle" font-size="36">${5 + n / 2}</text>`;
        }
        h += `<text x="${933 * U}" y="${11 * U}" text-anchor="end" font-size="36">centimeters</text>`;
        h += rect(771, 2, 1, 3, '#020403') + rect(771, 8, 1, 3, '#020403') + rect(771, 14, 1, 3, '#020403');
        document.getElementById('hruler').innerHTML = h;

        let v = rect(18, -1, 1, 355);
        for (let k = -9; k <= 27; k++) {
            const y = Math.round(89.2 + k * 9.45);
            const len = k % 10 === 0 ? 5 : k % 5 === 0 ? 2 : 1;
            v += rect(17 - len, y, len, 1);
            if (k % 10 === 0) v += `<text transform="translate(${11 * U} ${(y - 1) * U}) rotate(-90)" text-anchor="middle" font-size="36">${25 - k / 2}</text>`;
        }
        v += `<text transform="translate(${11 * U} ${351 * U}) rotate(-90)" font-size="36">centimeters</text>`;
        v += rect(2, 9, 3, 1, '#020403') + rect(8, 9, 3, 1, '#020403') + rect(14, 9, 3, 1, '#020403');
        document.getElementById('vruler').innerHTML = v;
    </script>
</body>
</html>
